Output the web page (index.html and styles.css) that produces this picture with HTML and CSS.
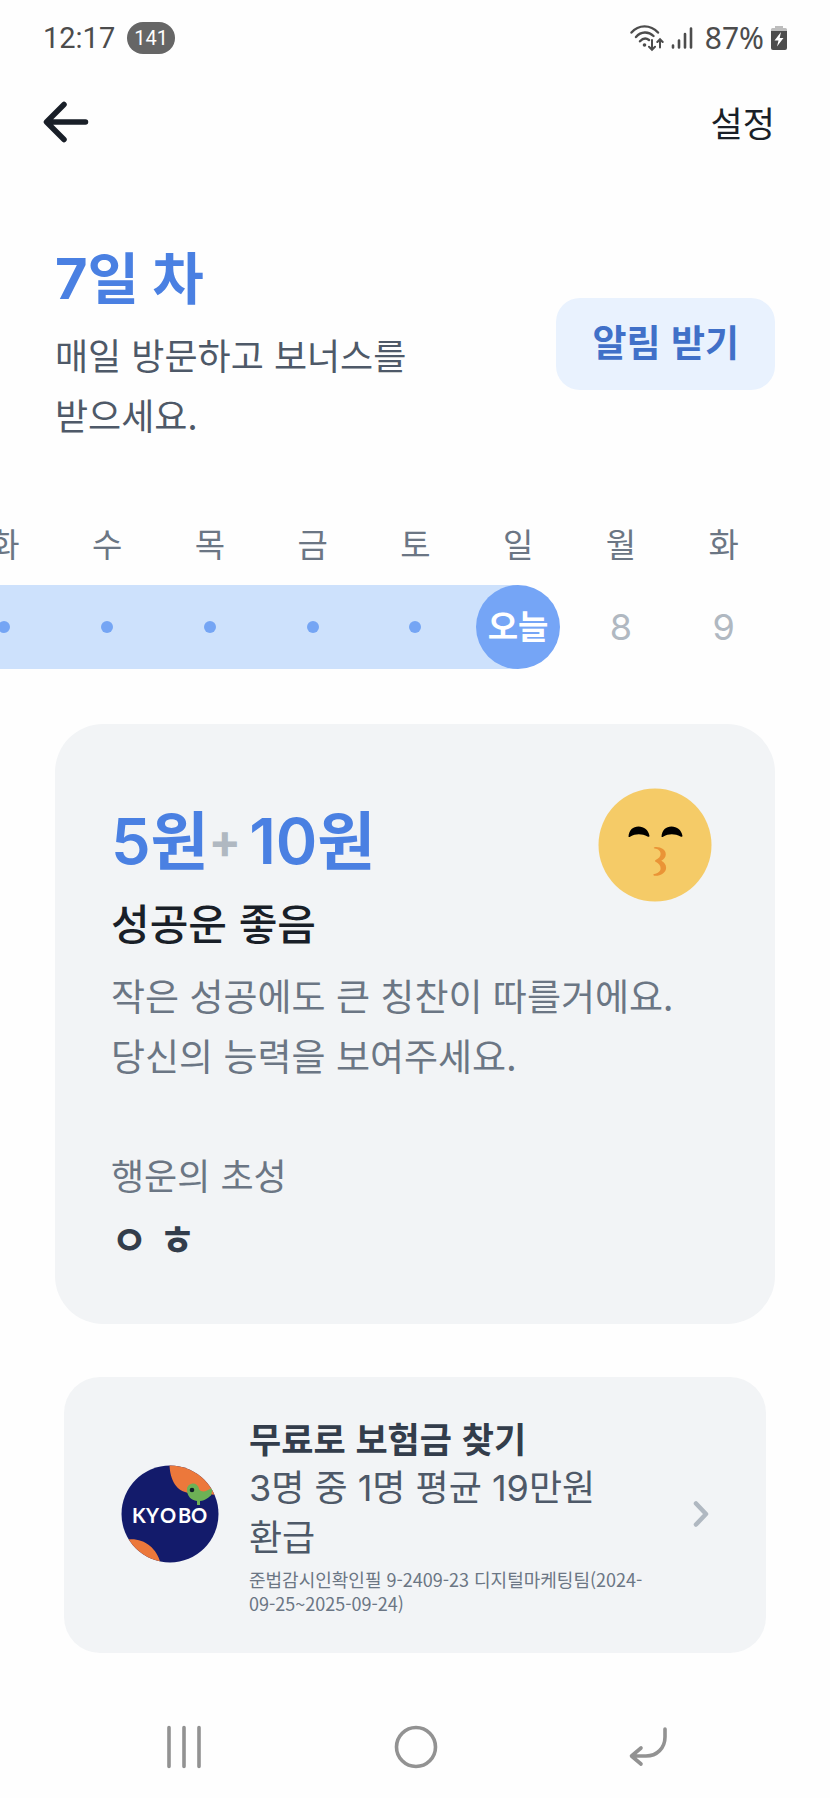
FILE: index.html
```html
<!DOCTYPE html>
<html lang="ko">
<head>
<meta charset="utf-8">
<meta name="viewport" content="width=device-width, initial-scale=1">
<title>7일 차</title>
<link rel="stylesheet" href="styles.css">
</head>
<body>
<div class="status">
  <div class="status-left">
    <span class="clock">12:17</span>
    <span class="count">141</span>
  </div>
  <div class="status-right">
    <svg class="wifi" width="34" height="28" viewBox="0 0 34 28" fill="none" stroke="#4c4c4c" stroke-width="2.4" stroke-linecap="round">
      <path d="M1.5 8.5C8.500 .3 20.500 .3 28 8.500M6 13C11 7.200 18.500 7.200 23.500 12M10 17.300C13 14 16.500 14 19 16"/>
      <circle cx="14.500" cy="21" r="1.800" fill="#4c4c4c" stroke="none"/>
      <path stroke-width="2" d="M22 16v9.500M19 22.800l3 3 3-3M30 23.500v-8M27.300 18l2.700-2.800 2.700 2.800"/>
    </svg>
    <svg class="signal" width="22" height="24" viewBox="0 0 22 24" stroke="#4c4c4c" stroke-width="2.600" stroke-linecap="round">
      <path d="M2 19.500v2M8 14.500v7M14 8v13.500M20 2.500v19"/>
    </svg>
    <span class="level">87%</span>
    <svg class="battery" width="16" height="24" viewBox="0 0 16 24">
      <path fill="#bdbdbd" d="M4 0h8v2h2.500a1.500 1.500 0 0 1 1.500 1.500V6H0V3.500A1.500 1.500 0 0 1 1.500 2H4z"/>
      <path fill="#4c4c4c" d="M0 5h16v17a2 2 0 0 1-2 2H2a2 2 0 0 1-2-2z"/>
      <path fill="#fff" d="M10 6 3.500 14.500h4L6 20.500 12.500 12H8.700z"/>
    </svg>
  </div>
</div>

<header class="topbar">
  <button class="back" type="button" aria-label="뒤로">
    <svg width="46" height="42" viewBox="0 0 46 42" fill="none" stroke="#191f28" stroke-width="5.500" stroke-linecap="round" stroke-linejoin="round">
      <path d="M21 3.500 3.500 21 21 38.500M4.500 21H42.500"/>
    </svg>
  </button>
  <a class="settings" href="#settings">설정</a>
</header>

<main>
  <section class="hero">
    <div class="hero-text">
      <h1>7일 차</h1>
      <p>매일 방문하고 보너스를 받으세요.</p>
    </div>
    <button class="notify" type="button">알림 받기</button>
  </section>

  <div class="week-scroll">
    <ol class="week">
      <li class="day done"><span class="name">화</span><span class="mark"><i class="dot"></i></span></li>
      <li class="day done"><span class="name">수</span><span class="mark"><i class="dot"></i></span></li>
      <li class="day done"><span class="name">목</span><span class="mark"><i class="dot"></i></span></li>
      <li class="day done"><span class="name">금</span><span class="mark"><i class="dot"></i></span></li>
      <li class="day done"><span class="name">토</span><span class="mark"><i class="dot"></i></span></li>
      <li class="day today"><span class="name">일</span><span class="mark"><b>오늘</b></span></li>
      <li class="day"><span class="name">월</span><span class="mark">8</span></li>
      <li class="day"><span class="name">화</span><span class="mark">9</span></li>
    </ol>
  </div>

  <section class="fortune">
    <div class="fortune-head">
      <div>
        <p class="amount"><span>5원</span><span class="plus">+</span><span>10원</span></p>
        <h2>성공운 좋음</h2>
      </div>
      <svg class="face" width="114" height="114" viewBox="0 0 114 114">
        <circle cx="57" cy="57" r="56.500" fill="#f5cb67"/>
        <path d="M30.500 48.500C31 42 35 38.500 40.500 38.500S50.500 42 51.500 48c-.3 1-1.300 1-2 .5-5.500-3-12-3-17 0-1 .7-1.800.7-2 0zM63.500 48.500C64 42 68 38.500 73.500 38.500S83.500 42 84.500 48c-.3 1-1.300 1-2 .5-5.500-3-12-3-17 0-1 .7-1.800.7-2 0z"/>
        <path fill="#ea9436" d="M56.500 59.200c6-.7 11.300 2.500 11.300 7 0 3-1.800 5-4.500 6.500 3 1.500 4.800 4 4.800 7 0 5-5.500 8.500-12 8-1-.3-1-1.300 0-1.600 3.800-.7 6.500-2.700 6.500-5.600 0-3.200-2-5.400-5-6.700-.8-.5-.8-1.400 0-1.900 3-1.300 5-3.200 5-6.100s-2.500-4.800-6-5.200c-1-.3-1-1.200-.1-1.400z"/>
      </svg>
    </div>
    <p class="fortune-body">작은 성공에도 큰 칭찬이 따를거에요.<br>당신의 능력을 보여주세요.</p>
    <h3>행운의 초성</h3>
    <p class="initials">ㅇ ㅎ</p>
  </section>

  <a class="promo" href="#insurance">
    <svg class="logo" width="98" height="98" viewBox="0 0 98 98" role="img" aria-label="KYOBO">
      <defs><clipPath id="disc"><circle cx="49" cy="49" r="48.500"/></clipPath></defs>
      <g clip-path="url(#disc)">
        <path fill="#131b6b" d="M0 0h98v98H0z"/>
        <path fill="#ec783b" d="M48.500 0C49 14 55 27 69 28l29 2V0zM0 76c18-6 35 4 39.500 22H0z"/>
        <path fill="#6db155" d="M66 25a6 6 0 0 1 12-1c2 3 5 3 8 1.500 3-1 4-3 6-3l-2 8c-3 2-5 5-11 5.500V40h-3v-4c-6-1-10-5-10-11z"/>
        <circle cx="71" cy="25" r="2.300" fill="#10202a"/>
      </g>
      <text class="logo-text" x="11 25 39 57 70" y="58" fill="#fff">KYOBO</text>
    </svg>
    <div class="promo-text">
      <strong>무료로 보험금 찾기</strong>
      <p>3명 중 1명 평균 19만원 환급</p>
      <small>준법감시인확인필 9-2409-23 디지털마케팅팀(2024-09-25~2025-09-24)</small>
    </div>
    <svg class="chevron" width="26" height="32" viewBox="0 0 26 32" fill="none" stroke="#b0b8c1" stroke-width="4.500" stroke-linecap="round" stroke-linejoin="round">
      <path d="M8 5.500 18 16 8 26.500"/>
    </svg>
  </a>
</main>

<nav class="sysnav">
  <button type="button" aria-label="최근 앱">
    <svg width="48" height="48" viewBox="0 0 48 48" stroke="#929292" stroke-width="3.600" stroke-linecap="round"><path d="M9 4.500v39M24 4.500v39M39 4.500v39"/></svg>
  </button>
  <button type="button" aria-label="홈">
    <svg width="48" height="48" viewBox="0 0 48 48" fill="none" stroke="#929292" stroke-width="3.600"><circle cx="24" cy="24" r="19.500"/></svg>
  </button>
  <button type="button" aria-label="이전">
    <svg width="48" height="48" viewBox="0 0 48 48" fill="none" stroke="#929292" stroke-width="3.600" stroke-linecap="round" stroke-linejoin="round"><path d="M40 6v8c0 11-8 19-19 19H7M16 25l-9.500 8 9.500 8"/></svg>
  </button>
</nav>
</body>
</html>
```

FILE: styles.css
```css
* {
  box-sizing: border-box;
  margin: 0;
  padding: 0;
}

body {
  background: #fefefe;
  color: #191f28;
  font-family: "Noto Sans CJK KR", sans-serif;
  font-size: 36px;
  word-break: keep-all;
}

svg {
  display: block;
  flex: none;
}

button {
  border: 0;
  background: none;
  font: inherit;
  color: inherit;
}

a {
  color: inherit;
  text-decoration: none;
}

/* status bar */
.status {
  display: flex;
  justify-content: space-between;
  align-items: center;
  height: 76px;
  padding: 0 43px;
  color: #4c4c4c;
  font-family: Roboto, sans-serif;
}

.status-left,
.status-right {
  display: flex;
  align-items: center;
}

.status-left {
  gap: 12px;
}

.clock {
  font-size: 29px;
  line-height: 36px;
}

.level {
  font-family: "Noto Sans", sans-serif;
  font-size: 30px;
  line-height: 36px;
}

.count {
  padding: 0 7px;
  border-radius: 16px;
  background: #666;
  color: #fff;
  font-size: 20px;
  line-height: 32px;
}

.signal {
  margin: 0 12px 0 7px;
}

.battery {
  margin-left: 7px;
}

/* top bar */
.topbar {
  display: flex;
  justify-content: space-between;
  align-items: center;
  height: 92px;
  padding: 0 55px 0 43px;
}

.settings {
  font-size: 35px;
  line-height: 48px;
}

/* heading */
.hero {
  display: flex;
  justify-content: space-between;
  align-items: center;
  padding: 76px 55px 0;
}

.hero-text {
  max-width: 400px;
}

h1 {
  color: #4a80e2;
  font-family: Inter, "Noto Sans CJK KR", sans-serif;
  font-size: 56px;
  font-weight: 700;
  line-height: 70px;
}

.hero p {
  margin-top: 10px;
  color: #4e5968;
  font-size: 36px;
  line-height: 60px;
}

.notify {
  padding: 14px 36px 20px;
  border-radius: 24px;
  background: #e9f2fe;
  color: #4070c8;
  font-size: 37px;
  font-weight: 600;
  line-height: 58px;
}

/* week strip */
.week-scroll {
  margin-top: 75px;
  overflow: hidden;
}

.week {
  display: grid;
  grid-template-columns: repeat(8, 1fr);
  margin: 0 55px 0 -47px;
  list-style: none;
}

.day {
  display: grid;
  gap: 18px;
  text-align: center;
}

.name {
  color: #6b7684;
  font-size: 33px;
  line-height: 48px;
}

.mark {
  display: flex;
  justify-content: center;
  align-items: center;
  height: 84px;
  color: #b0b8c1;
  font-family: Inter, "Noto Sans CJK KR", sans-serif;
  font-size: 36px;
}

.done .mark {
  background: #cde1fc;
}

.today .mark {
  background: linear-gradient(90deg, #cde1fc 50%, transparent 50%);
}

.dot {
  width: 12px;
  height: 12px;
  border-radius: 50%;
  background: #75a5f4;
}

.today b {
  width: 84px;
  border-radius: 50%;
  background: #75a5f6;
  color: #fff;
  font-size: 33px;
  font-weight: 600;
  line-height: 84px;
  white-space: nowrap;
}

/* fortune card */
.fortune {
  margin: 55px 55px 0;
  padding: 64px 56px 60px;
  border-radius: 48px;
  background: #f2f4f6;
}

.fortune-head {
  display: flex;
  justify-content: space-between;
  align-items: flex-start;
  padding-right: 7px;
}

.amount {
  display: flex;
  align-items: center;
  margin-top: 13px;
  color: #4a80e2;
  font-family: Inter, "Noto Sans CJK KR", sans-serif;
  font-size: 63px;
  font-weight: 600;
  line-height: 80px;
}

.plus {
  margin-right: 8px;
  color: #b0b8c1;
  font-size: 48px;
  font-weight: 700;
  line-height: 72px;
}

h2 {
  margin-top: 15px;
  font-size: 42px;
  font-weight: 500;
  line-height: 52px;
}

.fortune-body {
  margin-top: 17px;
  color: #6b7684;
  font-size: 37px;
  line-height: 60px;
}

h3 {
  margin-top: 63px;
  color: #6b7684;
  font-size: 36px;
  font-weight: 400;
  line-height: 52px;
}

.initials {
  margin-top: 12px;
  color: #333d4b;
  font-size: 40px;
  font-weight: 700;
  line-height: 52px;
}

/* promotion */
.promo {
  display: flex;
  align-items: center;
  margin: 53px 64px 0;
  padding: 36px 52px 38px 57px;
  border-radius: 36px;
  background: #f2f4f6;
}

.logo-text {
  font-family: Lato, sans-serif;
  font-size: 20px;
  font-weight: 700;
}

.promo-text {
  flex: 1;
  margin: 0 28px 0 30px;
  color: #4e5968;
  line-height: 50px;
}

.promo-text strong {
  display: block;
  color: #333d4b;
  font-size: 35px;
  font-weight: 700;
}

.promo-text p {
  font-family: Inter, "Noto Sans CJK KR", sans-serif;
}

.promo-text small {
  display: block;
  margin-top: 4px;
  color: #6b7684;
  font-size: 18px;
  line-height: 24px;
}

/* system navigation */
.sysnav {
  display: grid;
  grid-template-columns: repeat(3, 1fr);
  justify-items: center;
  padding: 70px 65px 26px 68px;
}
```
